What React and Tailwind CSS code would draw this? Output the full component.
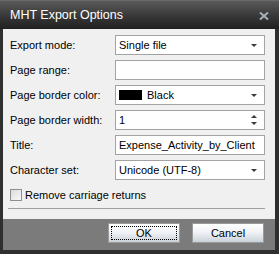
import React from 'react';

const font = { fontFamily: '"Liberation Sans", Arial, sans-serif' };

function Arrow() {
  return (
    <svg width="6" height="3" viewBox="0 0 6 3" className="absolute right-[7px] top-[8px]">
      <path d="M0 0h6L3 3z" fill="#3a3a3a" />
    </svg>
  );
}

function Field({ children, select, spin }) {
  return (
    <div className="relative w-[150px] h-[20px] bg-white border border-[#a3a3a3] flex items-center pl-[3px] text-[11px] text-black">
      {children}
      {select && <Arrow />}
      {spin && (
        <>
          <svg width="6" height="3" viewBox="0 0 6 3" className="absolute right-[7px] top-[4px]">
            <path d="M0 3h6L3 0z" fill="#3a3a3a" />
          </svg>
          <svg width="6" height="3" viewBox="0 0 6 3" className="absolute right-[7px] top-[11px]">
            <path d="M0 0h6L3 3z" fill="#3a3a3a" />
          </svg>
        </>
      )}
    </div>
  );
}

function Row({ label, children }) {
  return (
    <div className="flex items-center h-[20px]">
      <div className="w-[105px] text-[11px] text-black">{label}</div>
      {children}
    </div>
  );
}

function Button({ children, focused }) {
  return (
    <div className="relative w-[72px] h-[20px] border border-[#9a9a9a] bg-gradient-to-b from-[#ffffff] via-[#eef1f4] to-[#c9d2da] flex items-center justify-center text-[11px] text-black">
      {focused && <div className="absolute inset-[2px] border border-dotted border-black" />}
      {children}
    </div>
  );
}

export default function App() {
  return (
    <div className="w-[279px] h-[254px] bg-[#2f2f2f] flex flex-col" style={font}>
      <div className="relative h-[29px] bg-gradient-to-b from-[#5a5a5a] via-[#3a3a3a] to-[#202020] border-t border-[#6a6a6a] flex items-center pl-[10px]">
        <span className="text-white text-[12.5px]">MHT Export Options</span>
        <svg width="10" height="8" viewBox="0 0 10 8" className="absolute left-[259px] top-[11px]">
          <path d="M1 0.5L9 7.5M9 0.5L1 7.5" stroke="#a9b0b7" strokeWidth="2" />
        </svg>
      </div>
      <div className="ml-[3px] mr-[4px] h-[190px] bg-[#f0f0f0] flex flex-col pt-[6px] pl-[7px]">
        <div className="flex flex-col gap-[5px]">
          <Row label="Export mode:">
            <Field select>Single file</Field>
          </Row>
          <Row label="Page range:">
            <Field />
          </Row>
          <Row label="Page border color:">
            <Field select>
              <span className="inline-block w-[23px] h-[10px] bg-black mr-[5px]" />
              Black
            </Field>
          </Row>
          <Row label="Page border width:">
            <Field spin>1</Field>
          </Row>
          <Row label="Title:">
            <Field>Expense_Activity_by_Client</Field>
          </Row>
          <Row label="Character set:">
            <Field select>Unicode (UTF-8)</Field>
          </Row>
        </div>
        <div className="flex items-center mt-[9px] h-[12px]">
          <div className="w-[12px] h-[12px] border border-[#8e8e8e] bg-gradient-to-br from-[#dcdcdc] to-[#f8f8f8]" />
          <span className="ml-[3px] text-[11px] text-black">Remove carriage returns</span>
        </div>
        <div className="mt-[7px] -ml-[2px] w-[257px] h-px bg-[#a0a0a0]" />
      </div>
      <div className="ml-[3px] mr-[4px] h-[31px] bg-[#7b7b7b] flex justify-end gap-[12px] pt-[4px] pr-[11px]">
        <Button focused>OK</Button>
        <Button>Cancel</Button>
      </div>
    </div>
  );
}
